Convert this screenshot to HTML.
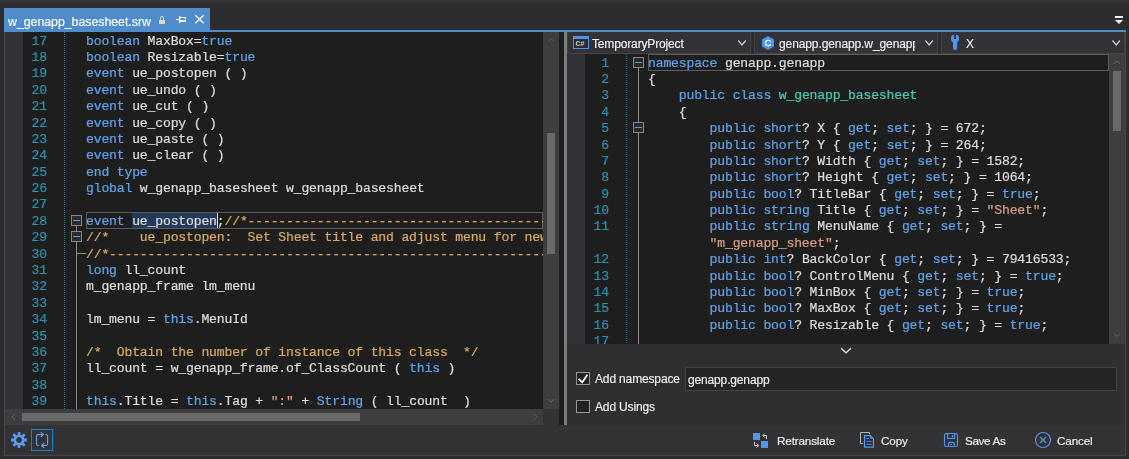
<!DOCTYPE html>
<html><head><meta charset="utf-8">
<style>
*{box-sizing:border-box;margin:0;padding:0}
html,body{width:1129px;height:459px;overflow:hidden;background:#2d2d30}
body{position:relative;font-family:"Liberation Sans",sans-serif;font-size:12px;letter-spacing:-0.15px;color:#f1f1f1}
.a{position:absolute}
.ed{position:absolute;background:#1e1e1e;overflow:hidden}
.ed .gut{position:absolute;left:0;top:0;bottom:0;width:18px;background:#333337}
.ed .dots{position:absolute;top:0;bottom:0;width:1px;background-image:linear-gradient(#27758d 50%,transparent 50%);background-size:1px 2px}
.ln{will-change:transform;-webkit-text-stroke:0.2px;letter-spacing:-0.1643px;position:absolute;left:18px;width:24px;text-align:right;color:#2b91af;font:13.100px/17px "Liberation Mono",monospace;height:17px;white-space:pre}
.cl{will-change:transform;-webkit-text-stroke:0.22px;letter-spacing:-0.1643px;position:absolute;left:81px;white-space:pre;font:13.100px/17px "Liberation Mono",monospace;height:17px;color:#dcdcdc}
.sel{color:#dcdcdc}
.fold{position:absolute;width:11px;height:11px;border:1px solid #868686;background:#2a2a2b}
.fold:after{content:"";position:absolute;left:1px;top:4px;width:7px;height:1px;background:#5a9ce0}
.vl{position:absolute;width:1px;background:#8a8a8a}
.hl{position:absolute;height:1px;background:#8a8a8a}
.curline{position:absolute;border:1px solid #5c5c5c}
.sb{position:absolute;background:#3e3e41}
.thumb{position:absolute;background:#6a6a6a}
.dd{position:absolute;top:32px;height:22px;background:#333337;border:1px solid #434346;border-top-color:#333337}
.txt{will-change:transform;-webkit-text-stroke:0.15px;position:absolute;white-space:pre;line-height:16px;height:16px}
.ico{position:absolute;left:0;top:0;width:1129px;height:459px;overflow:visible}
</style></head><body>
<!-- frame -->
<div class="a" style="left:0;top:0;width:1129px;height:2px;background:#363638"></div>
<div class="a" style="left:0;top:2px;width:1129px;height:1px;background:#313133"></div>
<div class="a" style="left:4px;top:8px;width:206px;height:22px;background:#4e8ccc"></div>
<div class="txt" style="left:8px;top:14px;font-size:12.3px;letter-spacing:0;color:#fff">w_genapp_basesheet.srw</div>
<div class="a" style="left:4px;top:30px;width:1122px;height:2px;background:#4e8ccc"></div>
<div class="a" style="left:4px;top:32px;width:1px;height:424px;background:#47474a"></div>
<div class="a" style="left:1125px;top:32px;width:1px;height:424px;background:#47474a"></div>
<div class="a" style="left:4px;top:455px;width:1122px;height:1px;background:#47474a"></div>

<!-- left editor -->
<div class="ed" id="le" style="left:5px;top:32px;width:538px;height:377px">
<div class="gut"></div>
<div class="dots" style="left:59px"></div>
<div class="curline" style="left:81px;top:180px;width:457px;height:17px"></div>
<div class="a" style="left:127.2px;top:181px;width:84.7px;height:15px;background:#22395a"></div>
<div class="a" style="left:212px;top:181px;width:1px;height:15px;background:#e6e6e6"></div>
<div class="ln" style="top:1px">17</div>
<div class="cl" style="top:1px"><span style="color:#5fa2ea">boolean</span><span style="color:#dcdcdc"> MaxBox=</span><span style="color:#5fa2ea">true</span></div>
<div class="ln" style="top:17px">18</div>
<div class="cl" style="top:17px"><span style="color:#5fa2ea">boolean</span><span style="color:#dcdcdc"> Resizable=</span><span style="color:#5fa2ea">true</span></div>
<div class="ln" style="top:33px">19</div>
<div class="cl" style="top:33px"><span style="color:#5fa2ea">event</span><span style="color:#dcdcdc"> ue_postopen ( )</span></div>
<div class="ln" style="top:50px">20</div>
<div class="cl" style="top:50px"><span style="color:#5fa2ea">event</span><span style="color:#dcdcdc"> ue_undo ( )</span></div>
<div class="ln" style="top:66px">21</div>
<div class="cl" style="top:66px"><span style="color:#5fa2ea">event</span><span style="color:#dcdcdc"> ue_cut ( )</span></div>
<div class="ln" style="top:83px">22</div>
<div class="cl" style="top:83px"><span style="color:#5fa2ea">event</span><span style="color:#dcdcdc"> ue_copy ( )</span></div>
<div class="ln" style="top:99px">23</div>
<div class="cl" style="top:99px"><span style="color:#5fa2ea">event</span><span style="color:#dcdcdc"> ue_paste ( )</span></div>
<div class="ln" style="top:115px">24</div>
<div class="cl" style="top:115px"><span style="color:#5fa2ea">event</span><span style="color:#dcdcdc"> ue_clear ( )</span></div>
<div class="ln" style="top:132px">25</div>
<div class="cl" style="top:132px"><span style="color:#5fa2ea">end type</span></div>
<div class="ln" style="top:148px">26</div>
<div class="cl" style="top:148px"><span style="color:#5fa2ea">global</span><span style="color:#dcdcdc"> w_genapp_basesheet w_genapp_basesheet</span></div>
<div class="ln" style="top:164px">27</div>
<div class="ln" style="top:181px">28</div>
<div class="cl" style="top:181px"><span style="color:#5fa2ea">event</span><span style="color:#dcdcdc"> </span><span class="sel">ue_postopen</span><span style="color:#dcdcdc">;</span><span style="color:#d8aa60">//*------------------------------------------------------------</span></div>
<div class="ln" style="top:197px">29</div>
<div class="cl" style="top:197px"><span style="color:#d8aa60">//*    ue_postopen:  Set Sheet title and adjust menu for new sheet</span></div>
<div class="ln" style="top:214px">30</div>
<div class="cl" style="top:214px"><span style="color:#d8aa60">//*------------------------------------------------------------</span></div>
<div class="ln" style="top:230px">31</div>
<div class="cl" style="top:230px"><span style="color:#5fa2ea">long</span><span style="color:#dcdcdc"> ll_count</span></div>
<div class="ln" style="top:246px">32</div>
<div class="cl" style="top:246px"><span style="color:#dcdcdc">m_genapp_frame lm_menu</span></div>
<div class="ln" style="top:263px">33</div>
<div class="ln" style="top:279px">34</div>
<div class="cl" style="top:279px"><span style="color:#dcdcdc">lm_menu = </span><span style="color:#5fa2ea">this</span><span style="color:#dcdcdc">.MenuId</span></div>
<div class="ln" style="top:296px">35</div>
<div class="ln" style="top:312px">36</div>
<div class="cl" style="top:312px"><span style="color:#d8aa60">/*  Obtain the number of instance of this class  */</span></div>
<div class="ln" style="top:328px">37</div>
<div class="cl" style="top:328px"><span style="color:#dcdcdc">ll_count = w_genapp_frame.of_ClassCount ( </span><span style="color:#5fa2ea">this</span><span style="color:#dcdcdc"> )</span></div>
<div class="ln" style="top:345px">38</div>
<div class="ln" style="top:361px">39</div>
<div class="cl" style="top:361px"><span style="color:#5fa2ea">this</span><span style="color:#dcdcdc">.Title = </span><span style="color:#5fa2ea">this</span><span style="color:#dcdcdc">.Tag + </span><span style="color:#d69d85">":"</span><span style="color:#dcdcdc"> + </span><span style="color:#5fa2ea">String</span><span style="color:#dcdcdc"> ( ll_count  )</span></div>
<div class="vl" style="left:71px;top:194px;height:200px"></div>
<div class="hl" style="left:71px;top:221px;width:10px"></div>
<div class="fold" style="left:66px;top:183px"></div>
<div class="fold" style="left:66px;top:199px"></div>
</div>
<!-- left scrollbars -->
<div class="sb" style="left:543px;top:32px;width:16px;height:377px"></div>
<div class="thumb" style="left:547px;top:133px;width:8px;height:121px"></div>
<div class="sb" style="left:5px;top:409px;width:538px;height:16px"></div>
<div class="thumb" style="left:22px;top:413px;width:338px;height:8px"></div>
<div class="a" style="left:543px;top:409px;width:16px;height:16px;background:#333336"></div>
<div class="a" style="left:559px;top:32px;width:5px;height:393px;background:#1e1e1e"></div>
<div class="a" style="left:564px;top:32px;width:3px;height:393px;background:#7c7c7c"></div>

<!-- right dropdowns -->
<div class="a" style="left:567px;top:32px;width:558px;height:22px;background:#2d2d30"></div>
<div class="dd" style="left:567px;width:184px"></div>
<div class="dd" style="left:754px;width:184px"></div>
<div class="dd" style="left:941px;width:184px"></div>
<div class="txt" style="left:592px;top:36px">TemporaryProject</div>
<div class="txt" style="left:779px;top:36px;width:135.5px;overflow:hidden;letter-spacing:-0.1px">genapp.genapp.w_genapp_basesheet</div>
<div class="txt" style="left:966px;top:36px">X</div>

<!-- right editor -->
<div class="ed" id="re" style="left:567px;top:54px;width:542px;height:290px">
<div class="gut"></div>
<div class="dots" style="left:59px"></div>
<div class="curline" style="left:81px;top:0px;width:461px;height:17px"></div>
<div class="ln" style="top:1px">1</div>
<div class="cl" style="top:1px"><span style="color:#5fa2ea">namespace</span><span style="color:#dcdcdc"> genapp.genapp</span></div>
<div class="ln" style="top:17px">2</div>
<div class="cl" style="top:17px"><span style="color:#dcdcdc">{</span></div>
<div class="ln" style="top:33px">3</div>
<div class="cl" style="top:33px"><span style="color:#dcdcdc">    </span><span style="color:#5fa2ea">public</span><span style="color:#dcdcdc"> </span><span style="color:#5fa2ea">class</span><span style="color:#dcdcdc"> </span><span style="color:#4ec9b0">w_genapp_basesheet</span></div>
<div class="ln" style="top:50px">4</div>
<div class="cl" style="top:50px"><span style="color:#dcdcdc">    {</span></div>
<div class="ln" style="top:66px">5</div>
<div class="cl" style="top:66px"><span style="color:#dcdcdc">        </span><span style="color:#5fa2ea">public</span><span style="color:#dcdcdc"> </span><span style="color:#5fa2ea">short</span><span style="color:#dcdcdc">? X { </span><span style="color:#5fa2ea">get</span><span style="color:#dcdcdc">; </span><span style="color:#5fa2ea">set</span><span style="color:#dcdcdc">; } =</span><span style="color:#dcdcdc"> </span><span style="color:#dcdcdc">672</span><span style="color:#dcdcdc">;</span></div>
<div class="ln" style="top:83px">6</div>
<div class="cl" style="top:83px"><span style="color:#dcdcdc">        </span><span style="color:#5fa2ea">public</span><span style="color:#dcdcdc"> </span><span style="color:#5fa2ea">short</span><span style="color:#dcdcdc">? Y { </span><span style="color:#5fa2ea">get</span><span style="color:#dcdcdc">; </span><span style="color:#5fa2ea">set</span><span style="color:#dcdcdc">; } =</span><span style="color:#dcdcdc"> </span><span style="color:#dcdcdc">264</span><span style="color:#dcdcdc">;</span></div>
<div class="ln" style="top:99px">7</div>
<div class="cl" style="top:99px"><span style="color:#dcdcdc">        </span><span style="color:#5fa2ea">public</span><span style="color:#dcdcdc"> </span><span style="color:#5fa2ea">short</span><span style="color:#dcdcdc">? Width { </span><span style="color:#5fa2ea">get</span><span style="color:#dcdcdc">; </span><span style="color:#5fa2ea">set</span><span style="color:#dcdcdc">; } =</span><span style="color:#dcdcdc"> </span><span style="color:#dcdcdc">1582</span><span style="color:#dcdcdc">;</span></div>
<div class="ln" style="top:115px">8</div>
<div class="cl" style="top:115px"><span style="color:#dcdcdc">        </span><span style="color:#5fa2ea">public</span><span style="color:#dcdcdc"> </span><span style="color:#5fa2ea">short</span><span style="color:#dcdcdc">? Height { </span><span style="color:#5fa2ea">get</span><span style="color:#dcdcdc">; </span><span style="color:#5fa2ea">set</span><span style="color:#dcdcdc">; } =</span><span style="color:#dcdcdc"> </span><span style="color:#dcdcdc">1064</span><span style="color:#dcdcdc">;</span></div>
<div class="ln" style="top:132px">9</div>
<div class="cl" style="top:132px"><span style="color:#dcdcdc">        </span><span style="color:#5fa2ea">public</span><span style="color:#dcdcdc"> </span><span style="color:#5fa2ea">bool</span><span style="color:#dcdcdc">? TitleBar { </span><span style="color:#5fa2ea">get</span><span style="color:#dcdcdc">; </span><span style="color:#5fa2ea">set</span><span style="color:#dcdcdc">; } =</span><span style="color:#dcdcdc"> </span><span style="color:#5fa2ea">true</span><span style="color:#dcdcdc">;</span></div>
<div class="ln" style="top:148px">10</div>
<div class="cl" style="top:148px"><span style="color:#dcdcdc">        </span><span style="color:#5fa2ea">public</span><span style="color:#dcdcdc"> </span><span style="color:#5fa2ea">string</span><span style="color:#dcdcdc"> Title { </span><span style="color:#5fa2ea">get</span><span style="color:#dcdcdc">; </span><span style="color:#5fa2ea">set</span><span style="color:#dcdcdc">; } =</span><span style="color:#dcdcdc"> </span><span style="color:#d69d85">"Sheet"</span><span style="color:#dcdcdc">;</span></div>
<div class="ln" style="top:164px">11</div>
<div class="cl" style="top:164px"><span style="color:#dcdcdc">        </span><span style="color:#5fa2ea">public</span><span style="color:#dcdcdc"> </span><span style="color:#5fa2ea">string</span><span style="color:#dcdcdc"> MenuName { </span><span style="color:#5fa2ea">get</span><span style="color:#dcdcdc">; </span><span style="color:#5fa2ea">set</span><span style="color:#dcdcdc">; } =</span></div>
<div class="cl" style="top:181px"><span style="color:#dcdcdc">        </span><span style="color:#d69d85">"m_genapp_sheet"</span><span style="color:#dcdcdc">;</span></div>
<div class="ln" style="top:197px">12</div>
<div class="cl" style="top:197px"><span style="color:#dcdcdc">        </span><span style="color:#5fa2ea">public</span><span style="color:#dcdcdc"> </span><span style="color:#5fa2ea">int</span><span style="color:#dcdcdc">? BackColor { </span><span style="color:#5fa2ea">get</span><span style="color:#dcdcdc">; </span><span style="color:#5fa2ea">set</span><span style="color:#dcdcdc">; } =</span><span style="color:#dcdcdc"> </span><span style="color:#dcdcdc">79416533</span><span style="color:#dcdcdc">;</span></div>
<div class="ln" style="top:214px">13</div>
<div class="cl" style="top:214px"><span style="color:#dcdcdc">        </span><span style="color:#5fa2ea">public</span><span style="color:#dcdcdc"> </span><span style="color:#5fa2ea">bool</span><span style="color:#dcdcdc">? ControlMenu { </span><span style="color:#5fa2ea">get</span><span style="color:#dcdcdc">; </span><span style="color:#5fa2ea">set</span><span style="color:#dcdcdc">; } =</span><span style="color:#dcdcdc"> </span><span style="color:#5fa2ea">true</span><span style="color:#dcdcdc">;</span></div>
<div class="ln" style="top:230px">14</div>
<div class="cl" style="top:230px"><span style="color:#dcdcdc">        </span><span style="color:#5fa2ea">public</span><span style="color:#dcdcdc"> </span><span style="color:#5fa2ea">bool</span><span style="color:#dcdcdc">? MinBox { </span><span style="color:#5fa2ea">get</span><span style="color:#dcdcdc">; </span><span style="color:#5fa2ea">set</span><span style="color:#dcdcdc">; } =</span><span style="color:#dcdcdc"> </span><span style="color:#5fa2ea">true</span><span style="color:#dcdcdc">;</span></div>
<div class="ln" style="top:246px">15</div>
<div class="cl" style="top:246px"><span style="color:#dcdcdc">        </span><span style="color:#5fa2ea">public</span><span style="color:#dcdcdc"> </span><span style="color:#5fa2ea">bool</span><span style="color:#dcdcdc">? MaxBox { </span><span style="color:#5fa2ea">get</span><span style="color:#dcdcdc">; </span><span style="color:#5fa2ea">set</span><span style="color:#dcdcdc">; } =</span><span style="color:#dcdcdc"> </span><span style="color:#5fa2ea">true</span><span style="color:#dcdcdc">;</span></div>
<div class="ln" style="top:263px">16</div>
<div class="cl" style="top:263px"><span style="color:#dcdcdc">        </span><span style="color:#5fa2ea">public</span><span style="color:#dcdcdc"> </span><span style="color:#5fa2ea">bool</span><span style="color:#dcdcdc">? Resizable { </span><span style="color:#5fa2ea">get</span><span style="color:#dcdcdc">; </span><span style="color:#5fa2ea">set</span><span style="color:#dcdcdc">; } =</span><span style="color:#dcdcdc"> </span><span style="color:#5fa2ea">true</span><span style="color:#dcdcdc">;</span></div>
<div class="ln" style="top:279px">17</div>
<div class="cl" style="top:279px"></div>
<div class="vl" style="left:71px;top:10px;height:300px"></div>
<div class="fold" style="left:66px;top:3px"></div>
<div class="fold" style="left:66px;top:68px"></div>
</div>
<div class="sb" style="left:1109px;top:54px;width:16px;height:290px"></div>
<div class="thumb" style="left:1113px;top:71px;width:8px;height:60px"></div>

<!-- options -->
<div class="a" style="left:567px;top:344px;width:558px;height:81px;background:#2f2f32"></div>
<div class="a" style="left:576px;top:372px;width:14px;height:13px;border:1px solid #969696;background:#222223"></div>
<div class="txt" style="left:595px;top:371px">Add namespace</div>
<div class="a" style="left:685px;top:367px;width:432px;height:24px;border:1px solid #434346;background:#252526"></div>
<div class="txt" style="left:688px;top:372px">genapp.genapp</div>
<div class="a" style="left:576px;top:400px;width:14px;height:13px;border:1px solid #969696;background:#222223"></div>
<div class="txt" style="left:595px;top:399px">Add Usings</div>

<!-- bottom bar -->
<div class="a" style="left:5px;top:425px;width:1120px;height:30px;background:#333336"></div>
<div class="txt" style="left:777px;top:433px;font-size:11.7px;letter-spacing:-0.15px">Retranslate</div>
<div class="txt" style="left:881px;top:433px;font-size:11.7px;letter-spacing:-0.15px">Copy</div>
<div class="txt" style="left:965px;top:433px;font-size:11.7px;letter-spacing:-0.35px">Save As</div>
<div class="txt" style="left:1057px;top:433px;font-size:11.7px;letter-spacing:-0.15px">Cancel</div>

<svg class="ico" viewBox="0 0 1129 459">
<!-- tab icons -->
<rect x="159" y="20" width="6" height="4" fill="#dcd6d0"/>
<path d="M160.5 20.5V18.2A1.5 1.8 0 0 1 163.5 18.2V20.5" fill="none" stroke="#dcd6d0" stroke-width="1"/>
<g fill="#fff">
<rect x="176" y="19" width="3" height="1"/><rect x="179" y="16" width="1.2" height="7"/>
<rect x="180" y="17" width="6" height="1"/><rect x="185" y="17" width="1" height="5"/><rect x="180" y="20" width="6" height="2"/>
<rect x="1115" y="16" width="8" height="2"/><polygon points="1115,20 1123,20 1119,24"/>
</g>
<path d="M195.3 15.2L203.7 23.2M203.7 15.2L195.3 23.2" stroke="#fff" stroke-width="1.3" fill="none"/>
<!-- scroll arrows -->
<g fill="none" stroke="#626262" stroke-width="1">
<polyline points="548,41.5 551,38.5 554,41.5"/>
<polyline points="548,399 551,402 554,399"/>
<polyline points="15,414 12,417 15,420"/>
<polyline points="534,413.7 537,416.7 534,419.7"/>
<polyline points="1114,64 1117,61 1120,64"/>
<polyline points="1114,333.5 1117,336.5 1120,333.5"/>
</g>
<!-- C# icon -->
<rect x="573.5" y="36.5" width="15" height="12" fill="#2d2d30" stroke="#4f94ea"/>
<rect x="573" y="36" width="16" height="3" fill="#4f94ea"/>
<text x="575.4" y="46.2" font-family="Liberation Mono, monospace" font-size="7.8" font-weight="bold" letter-spacing="0" fill="#c8c8c8">C#</text>
<!-- chevrons -->
<g fill="none" stroke="#d0d0d0" stroke-width="1.2">
<polyline points="738.3,40.5 742,45 745.7,40.5"/>
<polyline points="925.4,40.5 929.1,45 932.8,40.5"/>
<polyline points="1112.5,40.5 1116.2,45 1119.9,40.5"/>
<polyline points="841.1,348.2 846,352.8 851,348.2" stroke="#e0e0e0" stroke-width="1.3"/>
</g>
<!-- class hex -->
<polygon points="768,36 774,39.5 774,46.5 768,50 762,46.5 762,39.5" fill="#4f94ea"/>
<text x="764.5" y="46.3" font-family="Liberation Sans, sans-serif" font-size="9.6" letter-spacing="0" fill="#fff" stroke="#fff" stroke-width="0.3">C</text>
<!-- wrench -->
<circle cx="955" cy="38.6" r="4.1" fill="#4f94ea"/>
<rect x="953" y="39" width="4.2" height="11" rx="2" fill="#4f94ea"/>
<rect x="954" y="34" width="2" height="5" fill="#333337"/>
<!-- checkmark -->
<polyline points="578.6,378.9 582.2,382.4 587.4,374.7" fill="none" stroke="#fff" stroke-width="1.8"/>
<!-- retranslate -->
<rect x="753" y="433" width="7" height="7" fill="#5596e6"/><rect x="761" y="441" width="7" height="7" fill="#5596e6"/>
<g fill="none" stroke="#c8c8c8" stroke-width="1">
<path d="M763 435.5H766.5V439.2M764.8 433.5L762.8 435.5L764.8 437.5"/>
<path d="M754.5 441.8V445.5H758.2M756.7 443.5L758.7 445.5L756.7 447.5"/>
</g>
<!-- copy -->
<path d="M869.5 434.2V432.5H860.5V443.5H863" fill="none" stroke="#b4b4b4" stroke-width="1"/>
<path d="M864.6 435.7H870.3L873.4 438.8V447.2H864.6Z" fill="#2a2a2c" stroke="#4f9bf5" stroke-width="1.3"/>
<path d="M870.3 435.7V438.8H873.4Z" fill="#4f9bf5"/>
<path d="M866.5 438.5H869M866.5 441.4H871.6M866.5 444.3H871.6" stroke="#4f9bf5" stroke-width="1" fill="none"/>
<!-- save -->
<g fill="none" stroke="#4f94ea" stroke-width="1.2">
<rect x="944.5" y="433.5" width="13" height="13" rx="1.8"/>
<path d="M947.5 433.5V438.5H954.5V433.5M952.5 435V437.6"/>
<path d="M948.5 446.5V443.6A1.3 1.3 0 0 1 949.8 442.3H953A1.3 1.3 0 0 1 954.3 443.6V446.5M950 444.5H952.2"/>
</g>
<!-- cancel -->
<circle cx="1043" cy="440" r="7.5" fill="none" stroke="#4f94ea" stroke-width="1.2"/>
<path d="M1040 437L1046 443M1046 437L1040 443" stroke="#4f94ea" stroke-width="1.3" fill="none"/>
<!-- gear -->
<g transform="translate(19,440)" fill="#5c9cee">
<circle r="4.2" fill="none" stroke="#5c9cee" stroke-width="2.6"/>
<rect x="-1.4" y="-8" width="2.8" height="3" rx=".7"/>
<rect x="-1.4" y="-8" width="2.8" height="3" rx=".7" transform="rotate(45)"/>
<rect x="-1.4" y="-8" width="2.8" height="3" rx=".7" transform="rotate(90)"/>
<rect x="-1.4" y="-8" width="2.8" height="3" rx=".7" transform="rotate(135)"/>
<rect x="-1.4" y="-8" width="2.8" height="3" rx=".7" transform="rotate(180)"/>
<rect x="-1.4" y="-8" width="2.8" height="3" rx=".7" transform="rotate(225)"/>
<rect x="-1.4" y="-8" width="2.8" height="3" rx=".7" transform="rotate(270)"/>
<rect x="-1.4" y="-8" width="2.8" height="3" rx=".7" transform="rotate(315)"/>
</g>
<!-- toggle -->
<rect x="31.5" y="429.5" width="21" height="21" fill="#333337" stroke="#1084d9"/>
<g fill="none" stroke="#62a0f0" stroke-width="1.1">
<path d="M38.8 445.5H38A1.5 1.5 0 0 1 36.5 444V436.1A1.5 1.5 0 0 1 38 434.6H43.3M40.8 432.1L43.4 434.6L40.8 437.1"/>
<path d="M45.5 434.6H46.1A1.5 1.5 0 0 1 47.6 436.1V444A1.5 1.5 0 0 1 46.1 445.5H41.6M44.2 443L41.6 445.5L44.2 448"/>
</g>
</svg>
</body></html>
